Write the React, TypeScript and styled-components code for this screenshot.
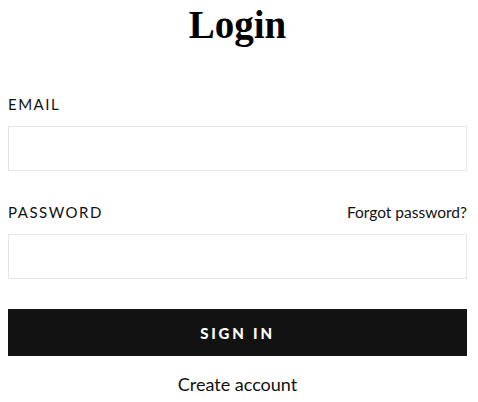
import React from 'react';
import styled, { createGlobalStyle } from 'styled-components';

const GlobalStyle = createGlobalStyle`
  html, body {
    margin: 0;
    padding: 0;
    background: #ffffff;
  }
  body {
    font-family: Lato, "Liberation Sans", sans-serif;
    color: #111111;
  }
`;

const Page = styled.div`
  width: 459px;
  margin-left: 8px;
  padding-top: 1px;
`;

const Title = styled.h1`
  margin: 0;
  font-family: "Liberation Serif", "Times New Roman", serif;
  font-weight: 700;
  font-size: 39px;
  line-height: 48px;
  text-align: center;
  color: #000;
`;

const Form = styled.form`
  margin-top: 45px;
  display: flex;
  flex-direction: column;
`;

const LabelRow = styled.div<{ $first?: boolean }>`
  display: flex;
  justify-content: space-between;
  align-items: baseline;
  margin-top: ${(p) => (p.$first ? '0' : '31px')};
  margin-bottom: 12px;
  line-height: 20px;
`;

const Label = styled.label`
  font-size: 15px;
  letter-spacing: 1.5px;
  text-transform: uppercase;
  color: #111;
`;

const Forgot = styled.a`
  font-size: 15.5px;
  color: #111;
  text-decoration: none;
  cursor: pointer;
`;

const Input = styled.input`
  box-sizing: border-box;
  width: 100%;
  height: 45px;
  border: 1px solid #e6e6e6;
  padding: 0 12px;
  font-size: 15px;
  outline: none;
  background: #fff;
`;

const Submit = styled.button`
  margin-top: 30px;
  height: 47px;
  width: 100%;
  border: none;
  background: #121212;
  color: #fff;
  font-family: Lato, "Liberation Sans", sans-serif;
  font-weight: 900;
  font-size: 15px;
  letter-spacing: 2.8px;
  cursor: pointer;
`;

const CreateLink = styled.a`
  display: block;
  margin-top: 17px;
  text-align: center;
  font-size: 18px;
  line-height: 22px;
  color: #111;
  text-decoration: none;
  cursor: pointer;
`;

const App = () => {
  return (
    <>
      <GlobalStyle />
      <Page>
        <Title>Login</Title>
        <Form onSubmit={(e) => e.preventDefault()}>
          <LabelRow $first>
            <Label htmlFor="email">Email</Label>
          </LabelRow>
          <Input id="email" type="email" />
          <LabelRow>
            <Label htmlFor="password">Password</Label>
            <Forgot>Forgot password?</Forgot>
          </LabelRow>
          <Input id="password" type="password" />
          <Submit type="submit">SIGN IN</Submit>
        </Form>
        <CreateLink>Create account</CreateLink>
      </Page>
    </>
  );
};

export default App;
